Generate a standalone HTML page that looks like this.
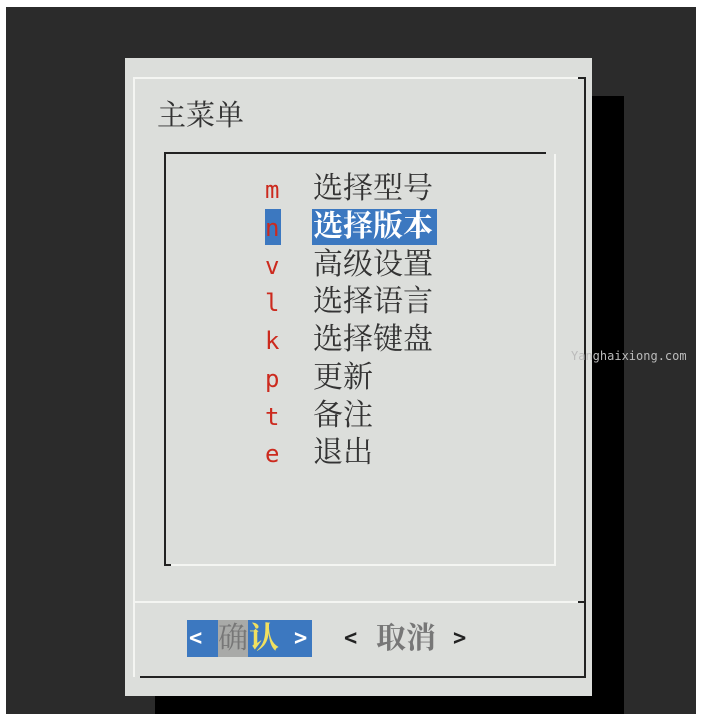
<!DOCTYPE html>
<html><head><meta charset="utf-8"><style>
*{margin:0;padding:0}
body{width:703px;height:714px;background:#fff;position:relative;overflow:hidden;font-family:"Liberation Serif","Noto Serif CJK SC",serif}
.a{position:absolute}
.t{position:absolute;font-size:30px;line-height:36px;color:#333;white-space:nowrap}
.k{position:absolute;font-family:"DejaVu Sans Mono",monospace;font-size:24px;line-height:36px;color:#cc2a1e;left:265px}
</style></head><body>
<div class="a" style="left:6px;top:7px;width:690px;height:707px;background:#2b2b2b"></div>
<div class="a" style="left:592px;top:96px;width:32px;height:618px;background:#000"></div>
<div class="a" style="left:155px;top:696px;width:469px;height:18px;background:#000"></div>
<div class="a" style="left:125px;top:58px;width:467px;height:638px;background:#dcdedb"></div>
<div class="a" style="left:133px;top:77px;width:451px;height:2px;background:#f4f5f2"></div>
<div class="a" style="left:133px;top:77px;width:2px;height:600px;background:#f4f5f2"></div>
<div class="a" style="left:578px;top:77px;width:8px;height:2px;background:#222"></div>
<div class="a" style="left:584px;top:77px;width:2px;height:601px;background:#222"></div>
<div class="a" style="left:140px;top:676px;width:446px;height:2px;background:#222"></div>
<div class="a" style="left:135px;top:601px;width:449px;height:2px;background:#f4f5f2"></div>
<div class="a" style="left:578px;top:601px;width:8px;height:2px;background:#222"></div>
<div class="a" style="left:164px;top:152px;width:382px;height:2px;background:#222"></div>
<div class="a" style="left:164px;top:152px;width:2px;height:414px;background:#222"></div>
<div class="a" style="left:164px;top:564px;width:7px;height:2px;background:#222"></div>
<div class="a" style="left:171px;top:564px;width:385px;height:2px;background:#f4f5f2"></div>
<div class="a" style="left:554px;top:154px;width:2px;height:412px;background:#f4f5f2"></div>
<div class="t" style="left:157px;top:98px;font-size:29px">主菜单</div>
<div class="a" style="left:265px;top:209px;width:16px;height:36px;background:#3c78c0"></div>
<div class="a" style="left:312px;top:209px;width:125px;height:36px;background:#3c78c0"></div>
<div class="k" style="top:172px">m</div><div class="t" style="left:313px;top:171px">选择型号</div>
<div class="k" style="top:210px">n</div><div class="t" style="left:313px;top:209px;color:#fff;font-weight:bold">选择版本</div>
<div class="k" style="top:248px">v</div><div class="t" style="left:313px;top:247px">高级设置</div>
<div class="k" style="top:285px">l</div><div class="t" style="left:313px;top:284px">选择语言</div>
<div class="k" style="top:323px">k</div><div class="t" style="left:313px;top:322px">选择键盘</div>
<div class="k" style="top:361px">p</div><div class="t" style="left:313px;top:360px">更新</div>
<div class="k" style="top:399px">t</div><div class="t" style="left:313px;top:398px">备注</div>
<div class="k" style="top:436px">e</div><div class="t" style="left:313px;top:435px">退出</div>
<div class="a" style="left:187px;top:620px;width:125px;height:37px;background:#3c78c0"></div>
<div class="a" style="left:218px;top:620px;width:30px;height:37px;background:#a9aaa8"></div>
<div class="t" style="left:189px;top:620px;color:#fff;font-family:'DejaVu Sans Mono',monospace;font-weight:bold;font-size:22px;line-height:37px">&lt;</div>
<div class="t" style="left:218px;top:620px;color:#777;font-size:30px;line-height:37px">确</div>
<div class="t" style="left:249px;top:620px;color:#f0e060;font-weight:bold;font-size:30px;line-height:37px">认</div>
<div class="t" style="left:294px;top:620px;color:#fff;font-family:'DejaVu Sans Mono',monospace;font-weight:bold;font-size:22px;line-height:37px">&gt;</div>
<div class="t" style="left:344px;top:620px;color:#222;font-family:'DejaVu Sans Mono',monospace;font-weight:bold;font-size:22px;line-height:37px">&lt;</div>
<div class="t" style="left:376px;top:620px;color:#777;font-weight:bold;font-size:30px;line-height:37px">取消</div>
<div class="t" style="left:453px;top:620px;color:#222;font-family:'DejaVu Sans Mono',monospace;font-weight:bold;font-size:22px;line-height:37px">&gt;</div>
<div class="a" style="left:571px;top:349px;font-family:'DejaVu Sans Mono',monospace;font-size:12px;color:#bbb;white-space:nowrap">Yanghaixiong.com</div>
</body></html>
